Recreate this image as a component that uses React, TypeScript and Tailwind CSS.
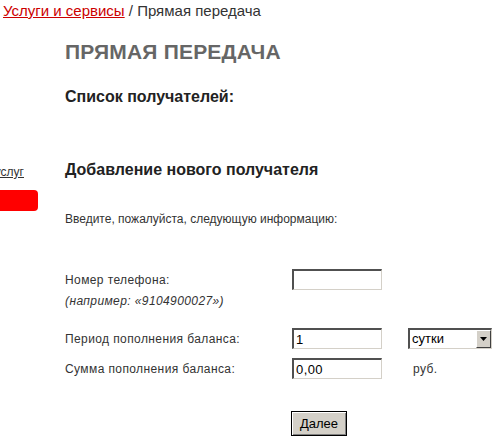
import React, { useState } from 'react';

const inputCls =
  'h-[21px] w-[90px] bg-white px-[2px] text-[13px] text-black outline-none border-t-2 border-l-2 border-b border-r border-t-[#505050] border-l-[#505050] border-b-[#d4d0c8] border-r-[#d4d0c8] font-["Liberation_Sans",Arial,sans-serif]';

const App: React.FC = () => {
  const [phone, setPhone] = useState('');
  const [period, setPeriod] = useState('1');
  const [sum, setSum] = useState('0,00');

  return (
    <div className="w-[500px] h-[442px] overflow-hidden bg-white text-[#333] font-['Liberation_Sans',Arial,sans-serif]">
      <div className="pl-[3px] pt-[2px] text-[15px] leading-[17px] text-[#333]">
        <a href="#" className="text-[#cc0000] underline">Услуги и сервисы</a> / Прямая передача
      </div>

      <div className="flex">
        <aside className="w-[65px] shrink-0 pt-[146px]">
          <div className="flex w-[24px] justify-end overflow-hidden">
            <a href="#" className="whitespace-nowrap text-[12px] leading-[14px] text-[#333] underline">Каталог услуг</a>
          </div>
          <div className="mt-[11px] h-[21px] w-[38px] rounded-r-[4px] bg-[#ff0000]" />
        </aside>

        <main className="flex-1">
          <h1 className="mt-[21px] text-[21px] leading-[24px] font-bold tracking-[0.2px] text-[#666]">ПРЯМАЯ ПЕРЕДАЧА</h1>
          <h2 className="mt-[24px] text-[16px] leading-[18px] font-bold text-[#222]">Список получателей:</h2>
          <h2 className="mt-[55px] text-[16px] leading-[18px] font-bold text-[#222]">Добавление нового получателя</h2>
          <p className="mt-[33px] text-[12px] leading-[14px] text-[#333]">Введите, пожалуйста, следующую информацию:</p>

          <form className="mt-[43px] text-[12px] leading-[14px] tracking-[0.4px] text-[#333]" onSubmit={(e) => e.preventDefault()}>
            <div className="flex h-[21px] items-center">
              <label className="w-[227px]">Номер телефона:</label>
              <input className={inputCls} value={phone} onChange={(e) => setPhone(e.target.value)} />
            </div>
            <div className="mt-[4px] italic">(например: «9104900027»)</div>

            <div className="mt-[20px] flex h-[21px] items-center">
              <label className="w-[227px]">Период пополнения баланса:</label>
              <input className={inputCls} value={period} onChange={(e) => setPeriod(e.target.value)} />
              <div className="ml-[26px] flex h-[21px] w-[84px] items-stretch bg-white border-t-2 border-l-2 border-b border-r border-t-[#505050] border-l-[#505050] border-b-[#d4d0c8] border-r-[#d4d0c8]">
                <span className="flex-1 pl-[2px] text-[13px] leading-[18px] tracking-normal text-black">сутки</span>
                <span className="flex w-[15px] items-center justify-center bg-[#d4d0c8] border border-t-white border-l-white border-b-[#404040] border-r-[#404040]">
                  <svg width="7" height="4" viewBox="0 0 7 4"><path d="M0 0h7L3.5 4z" fill="#000" /></svg>
                </span>
              </div>
            </div>

            <div className="mt-[9px] flex h-[21px] items-center">
              <label className="w-[227px]">Сумма пополнения баланса:</label>
              <input className={inputCls} value={sum} onChange={(e) => setSum(e.target.value)} />
              <span className="ml-[31px]">руб.</span>
            </div>

            <div className="mt-[32px] pl-[226px]">
              <button
                type="submit"
                className="h-[25px] w-[56px] bg-[#d4d0c8] text-[13px] tracking-normal text-black border border-black shadow-[inset_1px_1px_0_#fff,inset_-1px_-1px_0_#808080]"
              >
                Далее
              </button>
            </div>
          </form>
        </main>
      </div>
    </div>
  );
};

export default App;
